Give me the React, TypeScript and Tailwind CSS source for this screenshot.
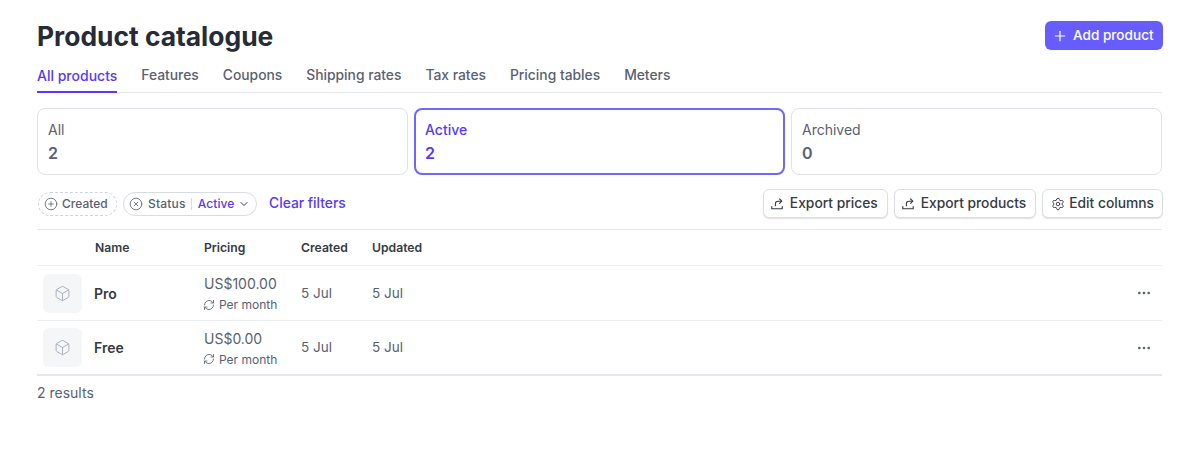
import { Box, ChevronDown, CirclePlus, CircleX, Ellipsis, Plus, RefreshCw, Settings } from "lucide-react";

const tabs = ["All products", "Features", "Coupons", "Shipping rates", "Tax rates", "Pricing tables", "Meters"];

const summaries = [
  { label: "All", count: "2", active: false },
  { label: "Active", count: "2", active: true },
  { label: "Archived", count: "0", active: false },
];

const products = [
  { name: "Pro", price: "US$100.00" },
  { name: "Free", price: "US$0.00" },
];

const ExportIcon = () => (
  <svg width="12" height="12" viewBox="0 0 12 12" fill="none" stroke="currentColor" strokeWidth="1.1" strokeLinecap="round" strokeLinejoin="round">
    <path d="M0.8 8.6v2.2h10.4V8.6" />
    <path d="M4.4 7.8V5.8c0-1.5 1-2.6 2.6-2.6h3.6" />
    <path d="M8.6 1l2.2 2.2-2.2 2.2" />
  </svg>
);

const ToolbarButton = ({ label, icon, spacing }: { label: string; icon: React.ReactNode; spacing: string }) => (
  <button className={`flex h-[29px] items-center ${spacing} rounded-[6px] border border-[#dcdfe6] bg-white text-[13.8px] leading-none font-medium text-[#353a44] shadow-[0_1px_1px_rgba(0,0,0,0.12)]`}>
    {icon}
    {label}
  </button>
);

export default function App() {
  return (
    <div className="h-[463px] w-[1200px] overflow-hidden bg-white pt-[21px] pr-[37px] pl-[37px] font-['Inter',sans-serif] text-[#353a44]">
      <div className="flex h-[29px] items-center justify-between">
        <h1 className="pt-[2px] text-[26.4px] leading-none font-bold text-[#262b36]">Product catalogue</h1>
        <button className="flex h-[29px] w-[118px] items-center gap-[5px] rounded-[6px] bg-[#675dff] pl-[7px] text-[13.6px] font-medium text-white">
          <Plus size={16} strokeWidth={1.8} />
          Add product
        </button>
      </div>

      <div className="mt-[7px] mr-px flex h-[36px] gap-[24px] border-b border-[#e5e7ec] text-[13.83px] font-medium text-[#596171]">
        {tabs.map((tab, i) => (
          <div
            key={tab}
            className={
              i === 0
                ? "-mb-px flex items-center border-b-2 border-[#533afd] pt-[3px] text-[14px] text-[#533afd]"
                : "-mb-px flex items-center border-b-2 border-transparent pt-[3px]"
            }
          >
            {tab}
          </div>
        ))}
      </div>

      <div className="mt-[15px] mr-px grid grid-cols-3 gap-[6px]">
        {summaries.map((s) => (
          <div
            key={s.label}
            className={
              s.active
                ? "h-[67px] rounded-[8px] border-2 border-[#6e66ff] px-[9px] pt-[11px] text-[#533afd]"
                : "h-[67px] rounded-[8px] border border-[#dfe2e9] px-[10px] pt-[12px] text-[#596171]"
            }
          >
            <div className={s.active ? "text-[14px] leading-[17px] font-medium" : "text-[14px] leading-[17px]"}>{s.label}</div>
            <div className="mt-[6px] text-[16px] leading-[19px] font-semibold">{s.count}</div>
          </div>
        ))}
      </div>

      <div className="mt-[14px] flex h-[29px] items-center justify-between">
        <div className="flex items-center gap-[6px] pl-px">
          <div className="flex h-[24px] w-[79px] items-center gap-[4px] rounded-full border border-dashed border-[#d0d4dc] pl-[5px] text-[12px] font-medium text-[#596171]">
            <CirclePlus size={14} strokeWidth={1.4} />
            Created
          </div>
          <div className="flex h-[24px] w-[134px] items-center rounded-full border border-[#d8dbe3] pl-[5px] text-[12px] font-medium text-[#596171]">
            <CircleX size={14} strokeWidth={1.4} />
            <span className="ml-[5px] tracking-[0.2px]">Status</span>
            <span className="mr-[6px] ml-[5px] h-[12px] w-px bg-[#d8dbe3]" />
            <span className="tracking-[0.1px] text-[#533afd]">Active</span>
            <ChevronDown size={12} strokeWidth={2} className="ml-[4px] text-[#353a44]" />
          </div>
          <span className="ml-[6px] text-[13.85px] font-medium text-[#533afd]">Clear filters</span>
        </div>
        <div className="flex gap-[6px]">
          <ToolbarButton label="Export prices" spacing="gap-[7px] pr-[9px] pl-[7px]" icon={<ExportIcon />} />
          <ToolbarButton label="Export products" spacing="gap-[7px] pr-[9px] pl-[7px]" icon={<ExportIcon />} />
          <ToolbarButton label="Edit columns" spacing="gap-[4px] pr-[8px] pl-[8px]" icon={<Settings size={14} strokeWidth={1.6} />} />
        </div>
      </div>

      <div className="mt-[11px] mr-px border-t border-[#e5e7ec]">
        <div className="flex h-[36px] items-center border-b border-[#ebedf1] pt-[2px] text-[12.2px] font-semibold text-[#353a44]">
          <div className="w-[57px]" />
          <div className="w-[109px] pl-px">Name</div>
          <div className="w-[97px] pl-px">Pricing</div>
          <div className="w-[71px] pl-px">Created</div>
          <div className="pl-px">Updated</div>
        </div>
        {products.map((p, i) => (
          <div
            key={p.name}
            className={
              i === products.length - 1
                ? "flex h-[55px] items-center border-b-2 border-[#e5e7ec]"
                : "flex h-[55px] items-center border-b border-[#ebedf1]"
            }
          >
            <div className="w-[57px] pl-[6px]">
              <div className="flex h-[39px] w-[39px] items-center justify-center rounded-[6px] bg-[#f5f6f8]">
                <Box size={17} strokeWidth={1.3} className="text-[#a3acba]" />
              </div>
            </div>
            <div className="w-[109px] text-[14px] font-semibold text-[#353a44]">{p.name}</div>
            <div className="w-[97px] pt-px pl-px text-[#596171]">
              <div className="text-[14px] leading-[17px]">{p.price}</div>
              <div className="mt-[5px] flex items-center gap-[4px] text-[12px] leading-[15px]">
                <RefreshCw size={12} strokeWidth={1.7} className="-ml-px" />
                Per month
              </div>
            </div>
            <div className="w-[71px] pl-px text-[13.5px] text-[#596171]">5 Jul</div>
            <div className="flex-1 pl-px text-[13.5px] text-[#596171]">5 Jul</div>
            <Ellipsis size={16} className="mr-[10px] text-[#596171]" />
          </div>
        ))}
      </div>

      <div className="mt-[8px] text-[14px] leading-[17px] text-[#596171]">2 results</div>
    </div>
  );
}
